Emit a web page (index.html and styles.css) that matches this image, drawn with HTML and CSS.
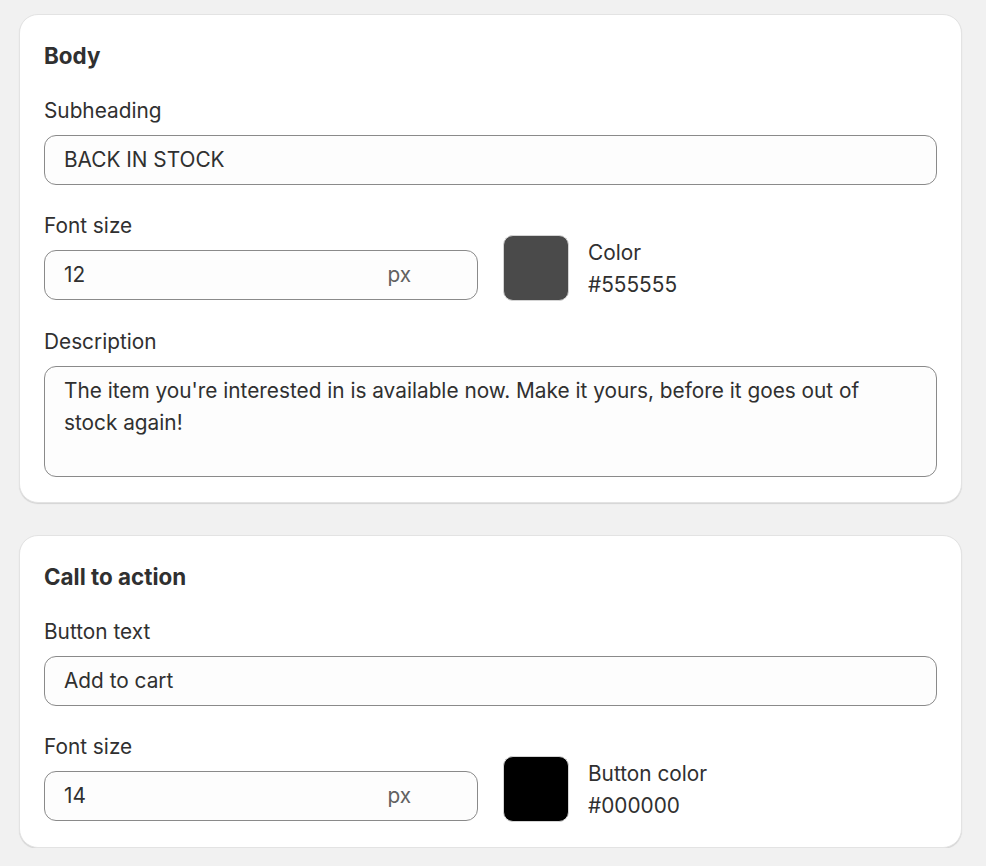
FILE: index.html
```html
<!DOCTYPE html>
<html>
<head>
<meta charset="utf-8">
<link rel="stylesheet" href="styles.css">
</head>
<body>
<div class="page">
  <section class="card">
    <h2 class="card-title">Body</h2>
    <div class="field">
      <label class="label">Subheading</label>
      <div class="input"><span class="value">BACK IN STOCK</span></div>
    </div>
    <div class="row">
      <div class="field">
        <label class="label">Font size</label>
        <div class="input"><span class="value">12</span><span class="suffix">px</span></div>
      </div>
      <div class="color">
        <div class="swatch swatch-grey"></div>
        <div class="color-text">
          <div>Color</div>
          <div>#555555</div>
        </div>
      </div>
    </div>
    <div class="field">
      <label class="label">Description</label>
      <div class="textarea">The item you're interested in is available now. Make it yours, before it goes out of stock again!</div>
    </div>
  </section>

  <section class="card">
    <h2 class="card-title">Call to action</h2>
    <div class="field">
      <label class="label">Button text</label>
      <div class="input"><span class="value">Add to cart</span></div>
    </div>
    <div class="row">
      <div class="field">
        <label class="label">Font size</label>
        <div class="input"><span class="value">14</span><span class="suffix">px</span></div>
      </div>
      <div class="color">
        <div class="swatch swatch-black"></div>
        <div class="color-text">
          <div>Button color</div>
          <div>#000000</div>
        </div>
      </div>
    </div>
  </section>
</div>
</body>
</html>
```

FILE: styles.css
```css
html, body {
  margin: 0;
  padding: 0;
  background: #f1f1f1;
}
body {
  font-family: Inter, "Noto Sans", sans-serif;
  color: #303030;
  font-size: 20.8px;
  line-height: 32px;
}
.page {
  padding: 14px 24px 0 19px;
  display: flex;
  flex-direction: column;
  gap: 32px;
}
.card {
  background: #fff;
  border: 1px solid #e3e3e3;
  border-radius: 19px;
  box-shadow: 0 1px 1px rgba(0,0,0,0.12);
  padding: 24px 24px 25px 24px;
  display: flex;
  flex-direction: column;
  gap: 25px;
}
.card-title {
  margin: 0 0 -2px 0;
  font-size: 22.4px;
  font-weight: 700;
  line-height: 33px;
}
.field {
  display: flex;
  flex-direction: column;
  gap: 8px;
}
.label {
  display: block;
  line-height: 32px;
}
.input {
  height: 48px;
  border: 1px solid #8a8a8a;
  border-radius: 12px;
  background: #fdfdfd;
  display: flex;
  align-items: center;
  padding: 0 19px;
  color: #303030;
}
.value {
  flex: 1;
}
.suffix {
  color: #616161;
  margin-right: 47px;
}
.row {
  display: grid;
  grid-template-columns: 1fr 1fr;
  column-gap: 25px;
  align-items: end;
  margin-bottom: 1px;
}
.color {
  display: flex;
  align-items: center;
  gap: 19px;
  margin-bottom: -1px;
}
.swatch {
  width: 64px;
  height: 64px;
  border: 1px solid #d4d4d4;
  border-radius: 10px;
}
.swatch-grey { background: #4a4a4a; }
.swatch-black { background: #000; }
.color-text {
  line-height: 32px;
  margin-top: 1px;
}
.textarea {
  height: 93px;
  border: 1px solid #8a8a8a;
  border-radius: 12px;
  background: #fdfdfd;
  padding: 8px 30px 8px 19px;
  line-height: 32px;
}
```
